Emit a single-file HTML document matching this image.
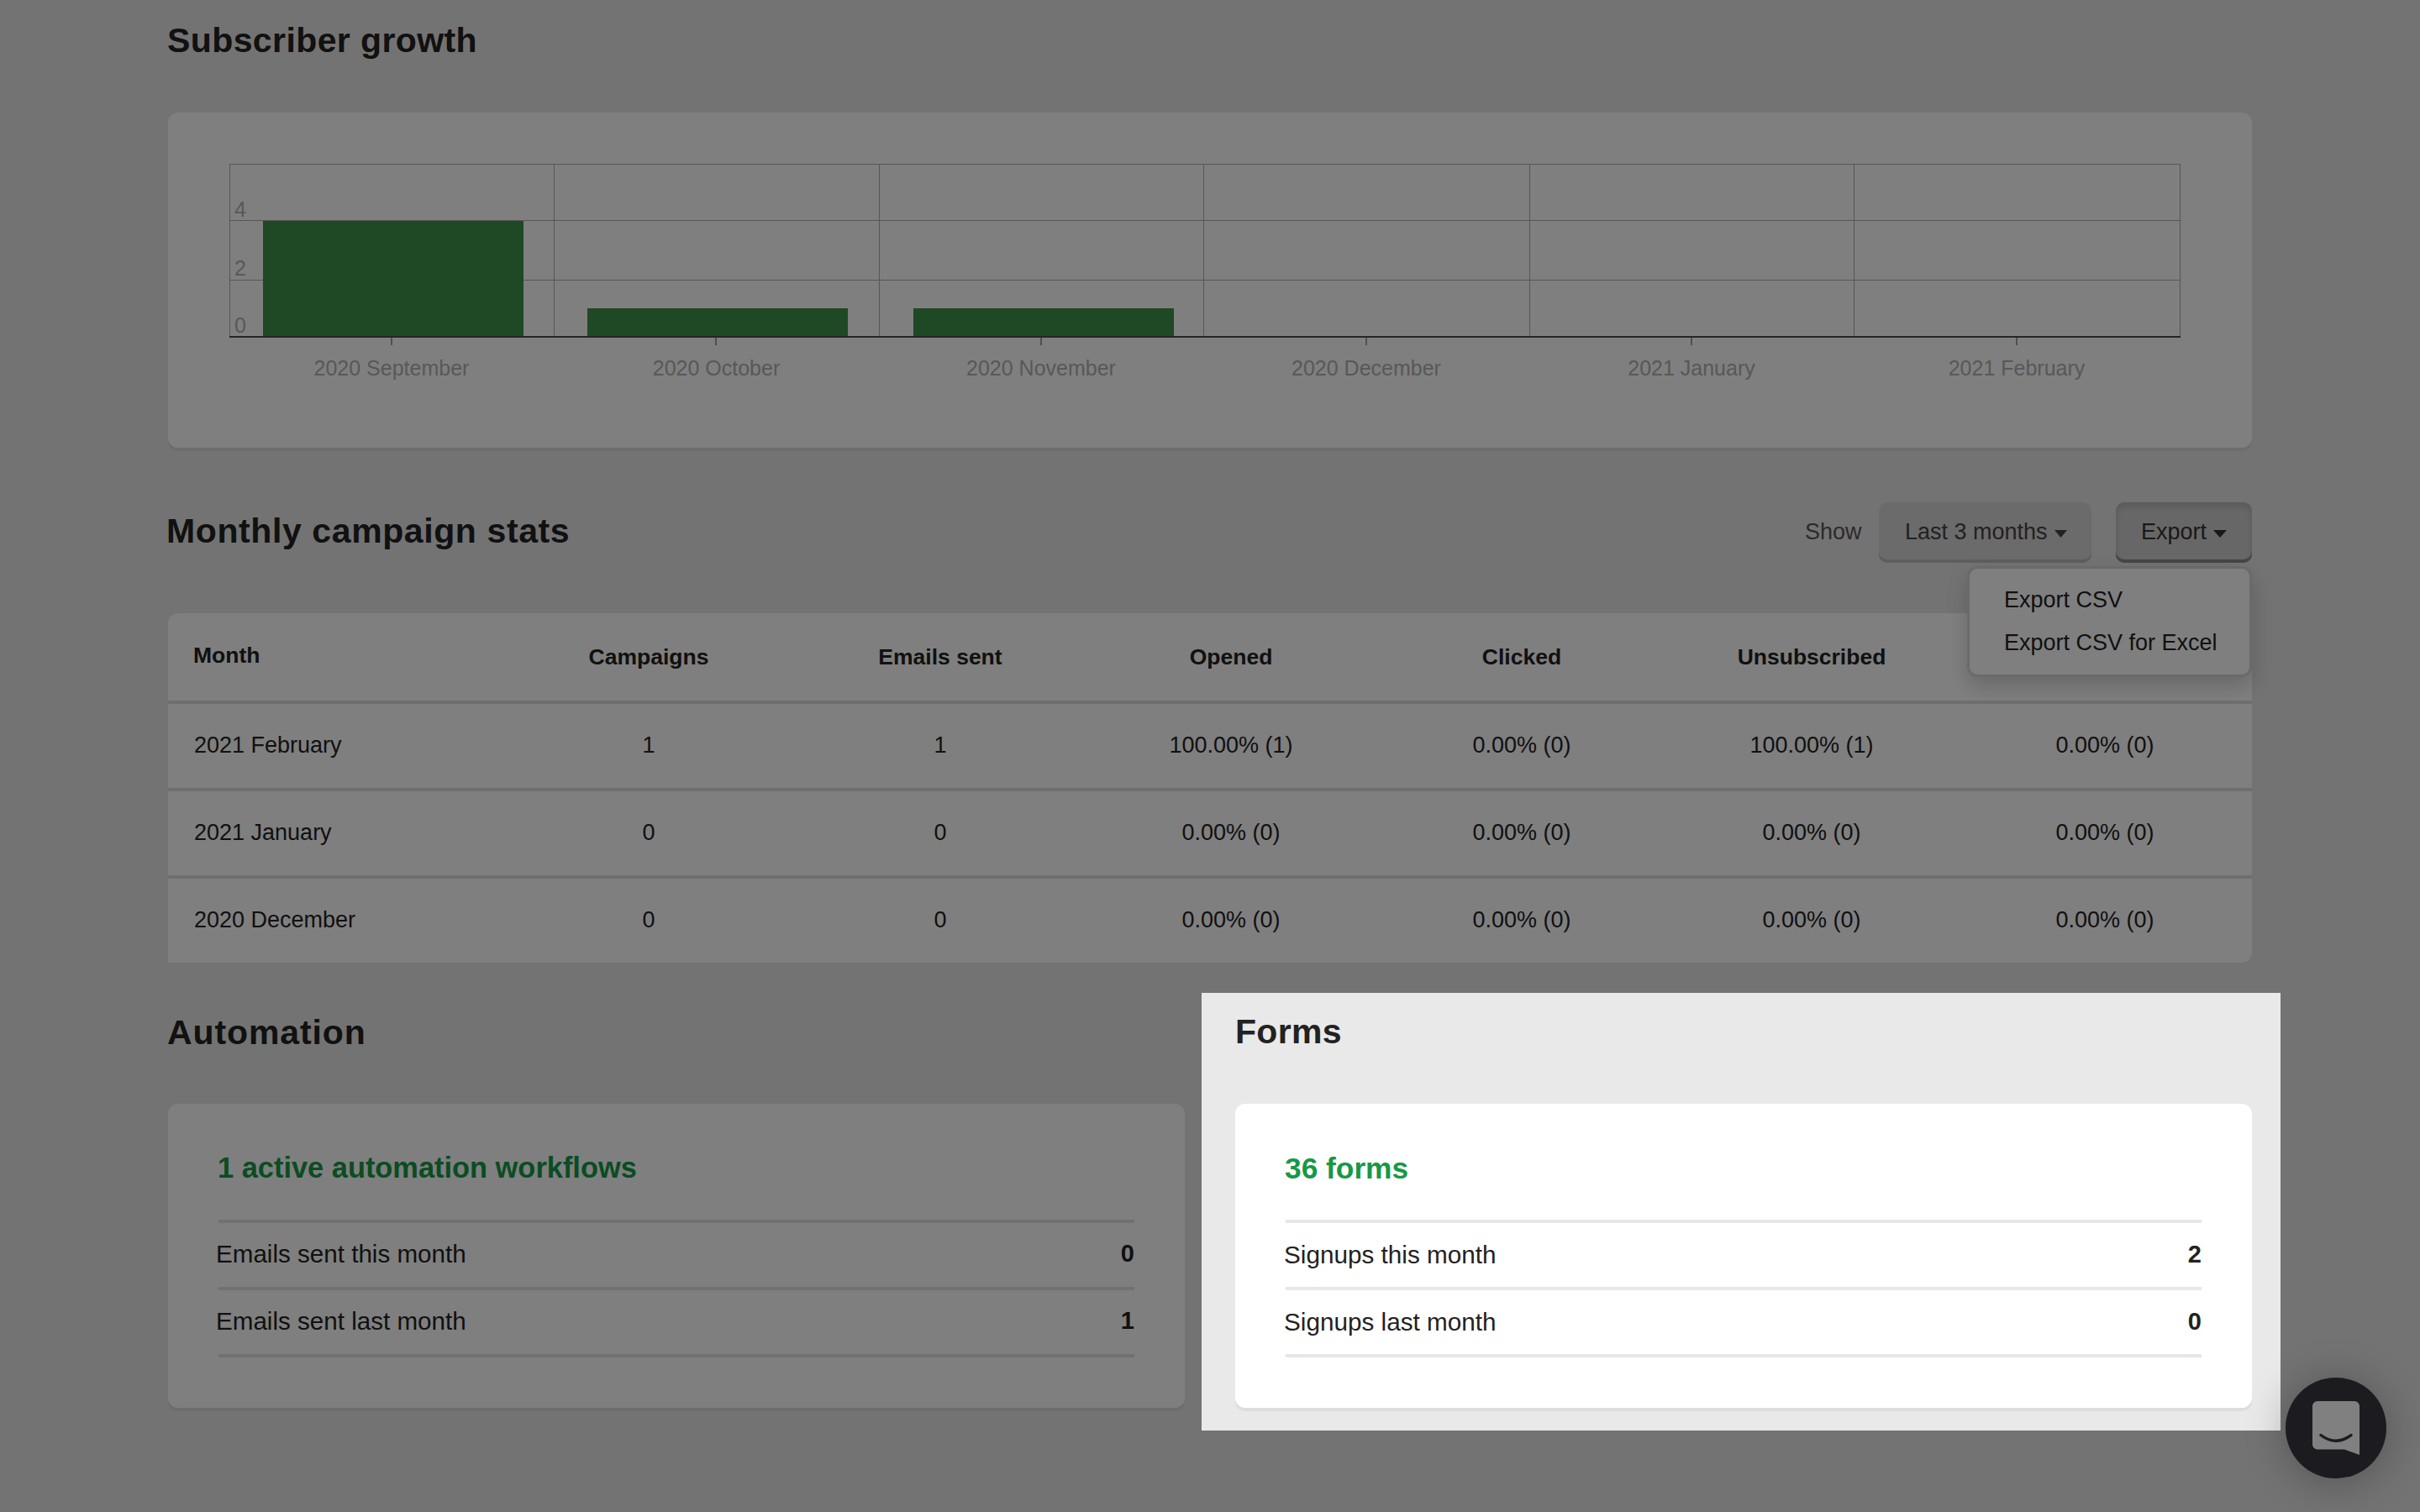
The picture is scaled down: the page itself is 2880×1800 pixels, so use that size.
<!DOCTYPE html>
<html><head><meta charset="utf-8"><title>Dashboard</title>
<style>
html,body{margin:0;padding:0;}
body{overflow:hidden;background:#737373;font-family:"Liberation Sans",sans-serif;}
#root{position:relative;width:2880px;height:1800px;overflow:hidden;background:#e6e6e6;transform-origin:0 0;}
.t{position:absolute;white-space:nowrap;line-height:1;}
#ov{position:absolute;left:0;top:0;width:2880px;height:1800px;background:rgba(0,0,0,0.5);}
</style></head><body>
<div id="root">
<div id="page">
<div class="t" style="left:199px;top:28.29px;font-size:41px;font-weight:700;color:#222;letter-spacing:0.4px;">Subscriber growth</div>
<div style="position:absolute;left:200px;top:134px;width:2480px;height:399px;background:#fff;border-radius:12px;box-shadow:0 4px 0 rgba(0,0,0,0.05);"></div>
<div style="position:absolute;left:273px;top:195px;width:1px;height:206px;background:#acacac;"></div>
<div style="position:absolute;left:659px;top:195px;width:1px;height:206px;background:#acacac;"></div>
<div style="position:absolute;left:1046px;top:195px;width:1px;height:206px;background:#acacac;"></div>
<div style="position:absolute;left:1432px;top:195px;width:1px;height:206px;background:#acacac;"></div>
<div style="position:absolute;left:1820px;top:195px;width:1px;height:206px;background:#acacac;"></div>
<div style="position:absolute;left:2206px;top:195px;width:1px;height:206px;background:#acacac;"></div>
<div style="position:absolute;left:2594px;top:195px;width:1px;height:206px;background:#acacac;"></div>
<div style="position:absolute;left:273px;top:195px;width:2322px;height:1px;background:#acacac;"></div>
<div style="position:absolute;left:273px;top:262px;width:2322px;height:1px;background:#acacac;"></div>
<div style="position:absolute;left:273px;top:333px;width:2322px;height:1px;background:#acacac;"></div>
<div style="position:absolute;left:313px;top:263px;width:310px;height:138px;background:#3e9048;"></div>
<div style="position:absolute;left:699px;top:367px;width:310px;height:34px;background:#3e9048;"></div>
<div style="position:absolute;left:1087px;top:367px;width:310px;height:34px;background:#3e9048;"></div>
<div style="position:absolute;left:273px;top:400px;width:2322px;height:2px;background:#4a4a4a;"></div>
<div style="position:absolute;left:465px;top:402px;width:2px;height:9px;background:#a0a0a0;"></div>
<div class="t" style="left:-534.0px;width:2000px;text-align:center;top:425.84px;font-size:25px;font-weight:400;color:#b0b0b0;">2020 September</div>
<div style="position:absolute;left:851px;top:402px;width:2px;height:9px;background:#a0a0a0;"></div>
<div class="t" style="left:-147.5px;width:2000px;text-align:center;top:425.84px;font-size:25px;font-weight:400;color:#b0b0b0;">2020 October</div>
<div style="position:absolute;left:1238px;top:402px;width:2px;height:9px;background:#a0a0a0;"></div>
<div class="t" style="left:239.0px;width:2000px;text-align:center;top:425.84px;font-size:25px;font-weight:400;color:#b0b0b0;">2020 November</div>
<div style="position:absolute;left:1625px;top:402px;width:2px;height:9px;background:#a0a0a0;"></div>
<div class="t" style="left:626.0px;width:2000px;text-align:center;top:425.84px;font-size:25px;font-weight:400;color:#b0b0b0;">2020 December</div>
<div style="position:absolute;left:2012px;top:402px;width:2px;height:9px;background:#a0a0a0;"></div>
<div class="t" style="left:1013.0px;width:2000px;text-align:center;top:425.84px;font-size:25px;font-weight:400;color:#b0b0b0;">2021 January</div>
<div style="position:absolute;left:2399px;top:402px;width:2px;height:9px;background:#a0a0a0;"></div>
<div class="t" style="left:1400.0px;width:2000px;text-align:center;top:425.84px;font-size:25px;font-weight:400;color:#b0b0b0;">2021 February</div>
<div class="t" style="left:279px;top:236.84px;font-size:25px;font-weight:400;color:#b0b0b0;">4</div>
<div class="t" style="left:279px;top:306.84px;font-size:25px;font-weight:400;color:#b0b0b0;">2</div>
<div class="t" style="left:279px;top:374.84px;font-size:25px;font-weight:400;color:#b0b0b0;">0</div>
<div class="t" style="left:198px;top:612.29px;font-size:41px;font-weight:700;color:#222;letter-spacing:0.6px;">Monthly campaign stats</div>
<div class="t" style="left:2148px;top:620.14px;font-size:27px;font-weight:400;color:#555;">Show</div>
<div style="position:absolute;left:2236px;top:598px;width:253px;height:72px;background:#d6d6d6;border-radius:10px;box-shadow:inset 0 -4px 0 #bcbcbc;"></div>
<div class="t" style="left:2267px;top:620.14px;font-size:27px;font-weight:400;color:#444;">Last 3 months</div>
<svg style="position:absolute;left:2445px;top:631px" width="15" height="9"><path d="M0 0H15L7.5 9Z" fill="#444"/></svg>
<div style="position:absolute;left:2518px;top:598px;width:162px;height:72px;background:#cfcfcf;border-radius:10px;box-shadow:inset 0 -4px 0 #8c8c8c, inset 0 5px 8px rgba(0,0,0,0.14);"></div>
<div class="t" style="left:2548px;top:620.14px;font-size:27px;font-weight:400;color:#333;">Export</div>
<svg style="position:absolute;left:2634px;top:631px" width="16" height="9"><path d="M0 0H16L8 9Z" fill="#333"/></svg>
<div style="position:absolute;left:200px;top:730px;width:2480px;height:416px;background:#fff;border-radius:12px 12px 12px 0;"></div>
<div style="position:absolute;left:200px;top:834px;width:2480px;height:4px;background:#dedede;"></div>
<div style="position:absolute;left:200px;top:938px;width:2480px;height:4px;background:#dedede;"></div>
<div style="position:absolute;left:200px;top:1042px;width:2480px;height:4px;background:#dedede;"></div>
<div class="t" style="left:230px;top:766.57px;font-size:26.5px;font-weight:700;color:#222;">Month</div>
<div class="t" style="left:-228px;width:2000px;text-align:center;top:768.57px;font-size:26.5px;font-weight:700;color:#222;">Campaigns</div>
<div class="t" style="left:119px;width:2000px;text-align:center;top:768.57px;font-size:26.5px;font-weight:700;color:#222;">Emails sent</div>
<div class="t" style="left:465px;width:2000px;text-align:center;top:768.57px;font-size:26.5px;font-weight:700;color:#222;">Opened</div>
<div class="t" style="left:811px;width:2000px;text-align:center;top:768.57px;font-size:26.5px;font-weight:700;color:#222;">Clicked</div>
<div class="t" style="left:1156px;width:2000px;text-align:center;top:768.57px;font-size:26.5px;font-weight:700;color:#222;">Unsubscribed</div>
<div class="t" style="left:1505px;width:2000px;text-align:center;top:768.57px;font-size:26.5px;font-weight:700;color:#222;">Bounced</div>
<div class="t" style="left:231px;top:874.14px;font-size:27px;font-weight:400;color:#222;">2021 February</div>
<div class="t" style="left:-228px;width:2000px;text-align:center;top:874.14px;font-size:27px;font-weight:400;color:#222;">1</div>
<div class="t" style="left:119px;width:2000px;text-align:center;top:874.14px;font-size:27px;font-weight:400;color:#222;">1</div>
<div class="t" style="left:465px;width:2000px;text-align:center;top:874.14px;font-size:27px;font-weight:400;color:#222;">100.00% (1)</div>
<div class="t" style="left:811px;width:2000px;text-align:center;top:874.14px;font-size:27px;font-weight:400;color:#222;">0.00% (0)</div>
<div class="t" style="left:1156px;width:2000px;text-align:center;top:874.14px;font-size:27px;font-weight:400;color:#222;">100.00% (1)</div>
<div class="t" style="left:1505px;width:2000px;text-align:center;top:874.14px;font-size:27px;font-weight:400;color:#222;">0.00% (0)</div>
<div class="t" style="left:231px;top:978.14px;font-size:27px;font-weight:400;color:#222;">2021 January</div>
<div class="t" style="left:-228px;width:2000px;text-align:center;top:978.14px;font-size:27px;font-weight:400;color:#222;">0</div>
<div class="t" style="left:119px;width:2000px;text-align:center;top:978.14px;font-size:27px;font-weight:400;color:#222;">0</div>
<div class="t" style="left:465px;width:2000px;text-align:center;top:978.14px;font-size:27px;font-weight:400;color:#222;">0.00% (0)</div>
<div class="t" style="left:811px;width:2000px;text-align:center;top:978.14px;font-size:27px;font-weight:400;color:#222;">0.00% (0)</div>
<div class="t" style="left:1156px;width:2000px;text-align:center;top:978.14px;font-size:27px;font-weight:400;color:#222;">0.00% (0)</div>
<div class="t" style="left:1505px;width:2000px;text-align:center;top:978.14px;font-size:27px;font-weight:400;color:#222;">0.00% (0)</div>
<div class="t" style="left:231px;top:1082.14px;font-size:27px;font-weight:400;color:#222;">2020 December</div>
<div class="t" style="left:-228px;width:2000px;text-align:center;top:1082.14px;font-size:27px;font-weight:400;color:#222;">0</div>
<div class="t" style="left:119px;width:2000px;text-align:center;top:1082.14px;font-size:27px;font-weight:400;color:#222;">0</div>
<div class="t" style="left:465px;width:2000px;text-align:center;top:1082.14px;font-size:27px;font-weight:400;color:#222;">0.00% (0)</div>
<div class="t" style="left:811px;width:2000px;text-align:center;top:1082.14px;font-size:27px;font-weight:400;color:#222;">0.00% (0)</div>
<div class="t" style="left:1156px;width:2000px;text-align:center;top:1082.14px;font-size:27px;font-weight:400;color:#222;">0.00% (0)</div>
<div class="t" style="left:1505px;width:2000px;text-align:center;top:1082.14px;font-size:27px;font-weight:400;color:#222;">0.00% (0)</div>
<div style="position:absolute;left:2341px;top:674px;width:339px;height:132px;background:#fff;border:3px solid rgba(0,0,0,0.17);border-radius:12px;box-sizing:border-box;box-shadow:0 12px 24px rgba(0,0,0,0.175);"></div>
<div class="t" style="left:2385px;top:701.14px;font-size:27px;font-weight:400;color:#222;">Export CSV</div>
<div class="t" style="left:2385px;top:752.14px;font-size:27px;font-weight:400;color:#222;">Export CSV for Excel</div>
<div class="t" style="left:199px;top:1209.29px;font-size:41px;font-weight:700;color:#222;letter-spacing:0.9px;">Automation</div>
<div style="position:absolute;left:200px;top:1314px;width:1210px;height:362px;background:#fff;border-radius:12px;box-shadow:0 4px 0 rgba(0,0,0,0.05);"></div>
<div class="t" style="left:259px;top:1372.88px;font-size:34.4px;font-weight:700;color:#179846;">1 active automation workflows</div>
<div style="position:absolute;left:260px;top:1452px;width:1090px;height:4px;background:#e1e3e8;"></div>
<div style="position:absolute;left:260px;top:1532px;width:1090px;height:4px;background:#e1e3e8;"></div>
<div style="position:absolute;left:260px;top:1612px;width:1090px;height:4px;background:#e1e3e8;"></div>
<div class="t" style="left:257px;top:1477.94px;font-size:29.6px;font-weight:400;color:#222;">Emails sent this month</div>
<div class="t" style="left:-650px;width:2000px;text-align:right;top:1478.45px;font-size:29px;font-weight:700;color:#222;">0</div>
<div class="t" style="left:257px;top:1557.94px;font-size:29.6px;font-weight:400;color:#222;">Emails sent last month</div>
<div class="t" style="left:-650px;width:2000px;text-align:right;top:1558.45px;font-size:29px;font-weight:700;color:#222;">1</div>
</div>
<div id="ov"></div>
<div id="hl">
<div style="position:absolute;left:1430px;top:1182px;width:1284px;height:521px;background:#e9e9e9;"></div>
<div class="t" style="left:1470px;top:1208.29px;font-size:41px;font-weight:700;color:#222;letter-spacing:0.3px;">Forms</div>
<div style="position:absolute;left:1470px;top:1314px;width:1210px;height:362px;background:#fff;border-radius:12px;box-shadow:0 4px 0 rgba(0,0,0,0.05);"></div>
<div class="t" style="left:1529px;top:1372.62px;font-size:35.3px;font-weight:700;color:#179846;">36 forms</div>
<div style="position:absolute;left:1530px;top:1452px;width:1090px;height:4px;background:#e6e6eb;"></div>
<div style="position:absolute;left:1530px;top:1532px;width:1090px;height:4px;background:#e6e6eb;"></div>
<div style="position:absolute;left:1530px;top:1612px;width:1090px;height:4px;background:#e6e6eb;"></div>
<div class="t" style="left:1528px;top:1478.86px;font-size:29.7px;font-weight:400;color:#222;">Signups this month</div>
<div class="t" style="left:620px;width:2000px;text-align:right;top:1479.45px;font-size:29px;font-weight:700;color:#222;">2</div>
<div class="t" style="left:1528px;top:1558.86px;font-size:29.7px;font-weight:400;color:#222;">Signups last month</div>
<div class="t" style="left:620px;width:2000px;text-align:right;top:1559.45px;font-size:29px;font-weight:700;color:#222;">0</div>
</div>
<div style="position:absolute;left:2720px;top:1640px;width:120px;height:120px;border-radius:50%;background:#1c1b20;box-shadow:0 4px 50px rgba(0,0,0,0.28);"></div>
<svg style="position:absolute;left:2752px;top:1668px" width="56" height="64" viewBox="0 0 56 64"><path d="M6 0H50A6 6 0 0 1 56 6V64L38 57.5H6A6 6 0 0 1 0 51.5V6A6 6 0 0 1 6 0Z" fill="#808080"/><path d="M10 40.5Q28 54 46 40.5" stroke="#1c1b20" stroke-width="3.4" fill="none" stroke-linecap="round"/></svg>
</div>
<script>(function(){var w=window.innerWidth||document.documentElement.clientWidth;var k=w/2880;if(w&&Math.abs(k-1)>0.001){document.getElementById('root').style.transform='scale('+k+')';}})();</script>
</body></html>
